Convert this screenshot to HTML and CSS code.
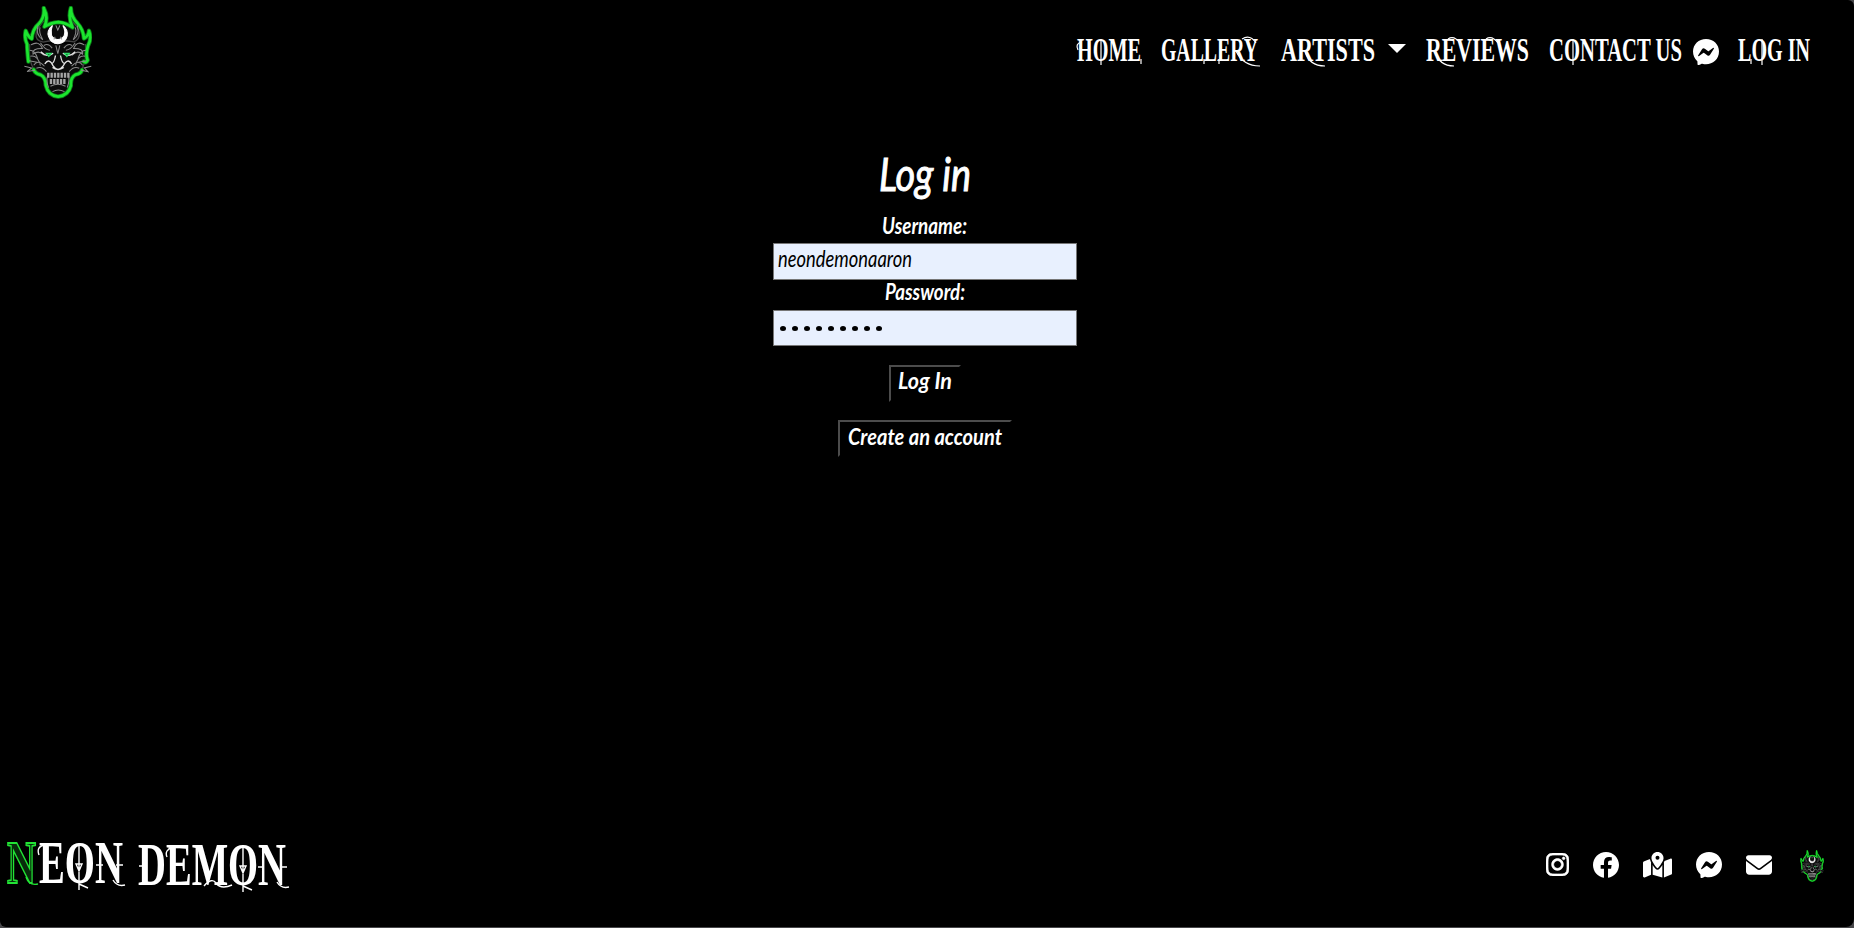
FILE: index.html
```html
<!DOCTYPE html>
<html lang="en">
<head>
<meta charset="utf-8">
<title>Neon Demon - Log in</title>
<link rel="stylesheet" href="styles.css">
</head>
<body>
<svg class="defs" aria-hidden="true">
  <symbol id="mask" viewBox="68 18 206 278">
    <path d="M130 62Q112 82 107 100Q104 122 128 126L150 122L172 128L196 122L220 125Q238 118 236 96Q230 76 214 64M88 132Q82 180 102 210L138 240Q138 282 172 285Q206 282 208 240L244 208Q262 170 254 132" fill="#0b0b0b" stroke="#444" stroke-width="4"/>
    <g fill="none" stroke-linecap="round" stroke-linejoin="round">
      <path id="flame" stroke="#0b7a17" stroke-width="13" d="M84 184Q80 148 80 132Q71 114 76 92Q84 112 94 116Q96 87 116 70Q133 52 130 24Q145 52 132 80Q150 68 174 66Q196 68 216 82Q202 53 211 24Q211 50 231 70Q248 88 250 115Q264 108 265 92Q274 116 262 137Q254 163 261 180Q257 190 249 184M100 208Q104 220 121 224Q136 232 136 255Q143 286 173 289Q204 285 211 256Q209 232 225 223Q242 220 244 209"/>
      <path stroke="#1ce52f" stroke-width="8" d="M84 184Q80 148 80 132Q71 114 76 92Q84 112 94 116Q96 87 116 70Q133 52 130 24Q145 52 132 80Q150 68 174 66Q196 68 216 82Q202 53 211 24Q211 50 231 70Q248 88 250 115Q264 108 265 92Q274 116 262 137Q254 163 261 180Q257 190 249 184M100 208Q104 220 121 224Q136 232 136 255Q143 286 173 289Q204 285 211 256Q209 232 225 223Q242 220 244 209"/>
    </g>
    <path d="M156 76Q138 92 144 109Q152 131 172 131Q195 128 200 107Q203 88 187 76Q196 92 191 106Q184 118 172 118Q158 117 153 105Q150 90 156 76" fill="#fff" stroke="#fff" stroke-width="3"/>
    <path d="M166 76L172 90L178 76M160 118l4-8M184 118l-4-8" fill="none" stroke="#999" stroke-width="3"/>
    <g fill="none" stroke="#8a8a8a" stroke-width="3">
      <path d="M113 76Q104 104 127 119Q114 96 119 82M230 76Q239 104 218 119Q230 96 224 82M92 134Q116 120 126 145Q94 144 98 162Q116 148 132 166M251 134Q229 120 219 145Q250 144 246 162Q230 148 214 166M90 168Q112 164 120 196M100 195Q112 176 132 198M254 168Q232 164 225 196M246 195Q234 176 213 198M72 198L94 203L80 214L104 210M272 198L251 203L262 214L242 210M130 136Q144 128 155 144M214 136Q202 128 190 144M150 258Q172 246 195 258M156 274Q173 264 192 274"/>
      <path d="M88 150Q104 150 112 176M86 182L110 186M256 150Q240 150 232 176M258 182L234 186M108 204Q124 196 138 214M236 204Q220 196 206 214M142 226Q136 240 144 262M204 226Q208 240 200 262M166 136L172 160L178 136M120 128Q134 150 148 150M224 128Q210 150 196 150"/>
    </g>
    <path d="M121 155Q139 174 158 159M224 155Q206 174 187 159M133 191Q146 171 158 197Q172 218 188 197Q202 171 213 191M156 202Q172 214 190 202M165 166Q161 190 153 190M180 166Q184 190 193 190" fill="none" stroke="#e2e2e2" stroke-width="4"/>
    <path d="M140 225L208 225M148 244L198 244" fill="none" stroke="#a4a4a4" stroke-width="15" stroke-dasharray="7 3"/>
    <path d="M138 160h14l-7 9zM192 160h14l-7 9z" fill="#07180b" stroke="#2edd66" stroke-width="4"/>
  </symbol>
  <symbol id="messenger" viewBox="8 8 496 496"><path d="M256.55 8C116.52 8 8 110.34 8 248.57c0 72.3 29.71 134.78 78.07 177.94 8.35 7.51 6.63 11.86 8.05 58.23A19.92 19.92 0 0 0 122 502.31c52.91-23.3 53.59-25.14 62.56-22.7C337.85 521.8 504 423.7 504 248.57 504 110.34 396.59 8 256.55 8zm149.24 185.13l-73 115.57a37.37 37.37 0 0 1-53.91 9.93l-58.08-43.47a15 15 0 0 0-18 0l-78.37 59.44c-10.46 7.93-24.16-4.6-17.11-15.67l73-115.57a37.36 37.36 0 0 1 53.91-9.93l58.06 43.46a15 15 0 0 0 18 0l78.41-59.38c10.44-7.98 24.14 4.54 17.09 15.62z"/></symbol>
</svg>
<div class="page">
  <header class="header">
    <svg class="logo"><use href="#mask"/></svg>
    <nav class="nav">
      <svg class="display" width="64" height="34"><text y="26" textLength="64" lengthAdjust="spacingAndGlyphs">HOME</text><path d="M24 4V30M1 15q-3-6 3-8M64 24v5"/></svg>
      <svg class="display" width="99" height="34"><text y="26" textLength="97" lengthAdjust="spacingAndGlyphs">GALLERY</text><path d="M75 16Q82 31 99 31M43 24v5M58 24v5M81 4q8-5 14 4"/></svg>
      <div class="dropdown">
        <svg class="display" width="94" height="34"><text y="26" textLength="94" lengthAdjust="spacingAndGlyphs">ARTISTS</text><path d="M24 16Q28 31 44 31"/></svg>
        <span class="caret"></span>
      </div>
      <svg class="display" width="103" height="34"><text y="26" textLength="103" lengthAdjust="spacingAndGlyphs">REVIEWS</text><path d="M9 16Q13 31 28 31M22 4q6-4 12 4M60 4q6-4 12 4"/></svg>
      <div class="contact">
        <svg class="display" width="133" height="34"><text y="26" textLength="133" lengthAdjust="spacingAndGlyphs">CONTACT US</text><path d="M24 4V30"/></svg>
        <svg class="icon" width="26" height="26"><use href="#messenger"/></svg>
      </div>
      <svg class="display" width="74" height="34"><text y="26" textLength="72" lengthAdjust="spacingAndGlyphs">LOG IN</text><path d="M24 4V30M13 24v5"/></svg>
    </nav>
  </header>
  <main class="login">
    <svg class="hand title" width="92" height="56"><text y="38" textLength="92" lengthAdjust="spacingAndGlyphs">Log in</text></svg>
    <svg class="hand label" width="86" height="30"><text y="21" textLength="85" lengthAdjust="spacingAndGlyphs">Username:</text></svg>
    <div class="field"><svg class="hand value" width="136" height="34"><text y="23" textLength="134" lengthAdjust="spacingAndGlyphs">neondemonaaron</text></svg></div>
    <svg class="hand label" width="81" height="30"><text y="20" textLength="80" lengthAdjust="spacingAndGlyphs">Password:</text></svg>
    <div class="field dots"><i></i><i></i><i></i><i></i><i></i><i></i><i></i><i></i><i></i></div>
    <div class="button"><svg class="hand" width="54" height="33"><text x="-1" y="22" textLength="54" lengthAdjust="spacingAndGlyphs">Log In</text></svg></div>
    <div class="button wide"><svg class="hand" width="155" height="33"><text y="23" textLength="154" lengthAdjust="spacingAndGlyphs">Create an account</text></svg></div>
  </main>
  <footer class="footer">
    <svg class="brand" width="294" height="60">
      <text class="neon" x="1" y="48" textLength="29" lengthAdjust="spacingAndGlyphs">N</text>
      <text x="33" y="48" textLength="84" lengthAdjust="spacingAndGlyphs">EON</text>
      <text x="132" y="50" textLength="148" lengthAdjust="spacingAndGlyphs">DEMON</text>
      <path class="tail" d="M20 42q3 9 12 7"/>
      <path d="M73 8V55M73 49l9 4M70 29h6l-3 7zM237 10V57M237 51l9 4M234 31h6l-3 7zM33 20q-3-8 5-10M90 30h7M110 30h7M107 45q4 7 12 5M133 31h6M161 22q-3-7 6-10M198 51q8-9 12-3q5 7 16 2M252 32h6M274 32h7M271 47q4 7 12 5"/>
    </svg>
    <div class="social">
      <svg width="23" height="23" viewBox="0 32 448 448"><path d="M224.1 141c-63.6 0-114.9 51.3-114.9 114.9s51.3 114.9 114.9 114.9S339 319.5 339 255.9 287.7 141 224.1 141zm0 189.6c-41.1 0-74.7-33.5-74.7-74.7s33.5-74.7 74.7-74.7 74.7 33.5 74.7 74.7-33.6 74.7-74.7 74.7zm146.4-194.3c0 14.9-12 26.8-26.8 26.8-14.9 0-26.8-12-26.8-26.8s12-26.8 26.8-26.8 26.8 12 26.8 26.8zm76.1 27.2c-1.7-35.9-9.9-67.7-36.2-93.9-26.2-26.2-58-34.4-93.9-36.2-37-2.1-147.9-2.1-184.9 0-35.8 1.7-67.6 9.9-93.9 36.1s-34.4 58-36.2 93.9c-2.1 37-2.1 147.9 0 184.9 1.7 35.9 9.9 67.7 36.2 93.9s58 34.4 93.9 36.2c37 2.1 147.9 2.1 184.9 0 35.9-1.7 67.7-9.9 93.9-36.2 26.2-26.2 34.4-58 36.2-93.9 2.1-37 2.1-147.8 0-184.8zM398.8 388c-7.8 19.6-22.9 34.7-42.6 42.6-29.5 11.7-99.5 9-132.1 9s-102.7 2.6-132.1-9c-19.6-7.8-34.7-22.9-42.6-42.6-11.7-29.5-9-99.5-9-132.1s-2.6-102.7 9-132.1c7.8-19.6 22.9-34.7 42.6-42.6 29.5-11.7 99.5-9 132.1-9s102.7-2.6 132.1 9c19.6 7.8 34.7 22.9 42.6 42.6 11.7 29.5 9 99.5 9 132.1s2.7 102.7-9 132.1z" stroke="#fff" stroke-width="12"/></svg>
      <svg width="26" height="26" viewBox="8 8 496 496"><path d="M504 256C504 119 393 8 256 8S8 119 8 256c0 123.78 90.69 226.38 209.25 245V327.69h-63V256h63v-54.64c0-62.15 37-96.48 93.67-96.48 27.14 0 55.52 4.84 55.52 4.84v61h-31.28c-30.8 0-40.41 19.12-40.41 38.73V256h68.78l-11 71.69h-57.78V501C413.31 482.38 504 379.78 504 256z"/></svg>
      <svg width="29" height="26" viewBox="0 0 576 512"><path d="M408 120c0 54.6-73.1 151.9-105.2 192c-7.7 9.6-22 9.6-29.6 0C241.1 271.9 168 174.6 168 120C168 53.7 221.7 0 288 0s120 53.7 120 120zm8 80.4c3.5-6.9 6.7-13.8 9.6-20.6c.5-1.2 1-2.5 1.5-3.7l116-46.4C558.9 123.4 576 135 576 152V422.8c0 9.8-6 18.6-15.1 22.3L416 503V200.4zM137.6 138.3c2.4 14.1 7.2 28.3 12.8 41.5c2.9 6.8 6.1 13.7 9.6 20.6V451.8L32.9 502.7C17.1 509 0 497.4 0 480.4V209.6c0-9.8 6-18.6 15.1-22.3l122.6-49zM327.8 332c13.9-17.4 35.7-45.7 56.2-77V504.3L192 449.4V255c20.5 31.3 42.3 59.6 56.2 77c20.5 25.6 59.1 25.6 79.6 0zM288 152a40 40 0 1 0 0-80 40 40 0 1 0 0 80z" fill-rule="evenodd"/></svg>
      <svg width="26" height="26"><use href="#messenger"/></svg>
      <svg width="26" height="26" viewBox="0 0 512 512"><path d="M48 64C21.5 64 0 85.5 0 112c0 15.1 7.1 29.3 19.2 38.4L236.8 313.6c11.4 8.5 27 8.5 38.4 0L492.8 150.4c12.1-9.1 19.2-23.3 19.2-38.4c0-26.5-21.5-48-48-48H48zM0 176V384c0 35.3 28.7 64 64 64H448c35.3 0 64-28.7 64-64V176L294.4 339.2c-22.8 17.1-54 17.1-76.8 0L0 176z"/></svg>
      <svg class="mini" width="24" height="32"><use href="#mask"/></svg>
    </div>
  </footer>
</div>
</body>
</html>
```

FILE: styles.css
```css
* { box-sizing: border-box; }
body { margin: 0; background: #47474a; overflow: hidden; }
svg { display: block; flex: none; fill: #fff; }
.defs { position: absolute; width: 0; height: 0; }
.page { height: 927px; display: flex; flex-direction: column; background: #000; border-radius: 0 6px 8px 6px; overflow: hidden; }
.header { height: 105px; padding: 0 42px 0 23px; display: flex; align-items: flex-start; justify-content: space-between; }
.logo { width: 69px; height: 93px; margin-top: 6px; }
.nav { display: flex; gap: 20px; padding-top: 35px; }
.display, .brand { overflow: visible; font-family: "Liberation Serif", serif; font-weight: 700; font-size: 33px; }
.display path { fill: none; stroke: #fff; stroke-width: 1.2px; }
.dropdown, .contact { display: flex; }
.dropdown { margin-left: 1px; }
.caret { margin: 9px 0 0 13px; border: 9px solid transparent; border-top-color: #fff; border-bottom: 0; height: 9px; }
.contact .icon { margin: 4px 0 0 11px; }
.nav > :last-child { margin-left: -1px; }
.login { width: 304px; margin-left: 773px; padding-top: 48px; display: flex; flex-direction: column; align-items: center; }
.hand { overflow: visible; font-family: Lato, sans-serif; font-style: italic; font-weight: 700; font-size: 23px; }
.title { font-size: 46px; font-weight: 400; stroke: #fff; stroke-width: 1px; height: 60px; }
.label { font-size: 22px; }
.field { width: 304px; height: 37px; background: #e8f0fe; border: 1px solid #767676; padding-left: 4px; }
.value { fill: #000; font-weight: 400; font-size: 24px; }
.dots { display: flex; align-items: center; gap: 6px; padding-left: 6px; height: 36px; margin-bottom: 1px; }
.dots i { width: 6px; height: 5px; border-radius: 50%; background: #000; }
.button { width: 72px; height: 37px; margin-top: 18px; padding-left: 8px; border: 2px solid #000; border-top-color: #4c4c4c; border-left-color: #4c4c4c; }
.wide { width: 174px; }
.footer { margin-top: auto; height: 92px; display: flex; justify-content: space-between; padding: 0 30px 0 6px; }
.brand { font-size: 62px; }
.brand .neon { fill: #082b0b; stroke: #22e335; stroke-width: 1.8px; }
.brand path { stroke: #fff; stroke-width: 1.4px; fill: none; }
.brand .tail { stroke: #22e335; }
.social { height: 59px; display: flex; align-items: center; gap: 24px; }
.mini { margin: 2px 0 0 4px; }
```
